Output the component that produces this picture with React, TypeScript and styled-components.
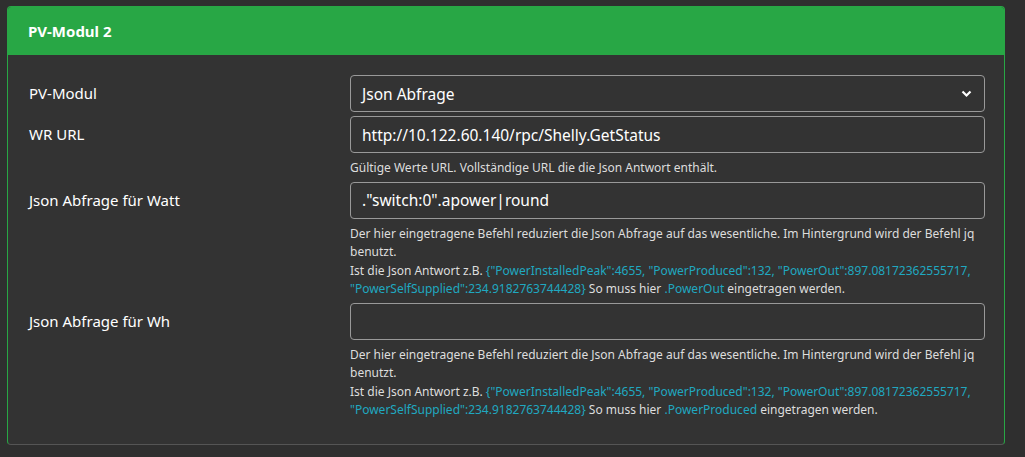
import React from "react";
import styled, { createGlobalStyle } from "styled-components";

const Global = createGlobalStyle`
  html, body { margin: 0; background: #2f2f2f; }
  body { font-family: "Noto Sans", "Open Sans", sans-serif; color: #fff; }
`;

const Page = styled.div`
  padding: 6px 20px 14px 7px;
`;
const Card = styled.div`
  border: 1px solid #28a745;
  border-bottom-color: #555;
  border-radius: 4px;
  background: #333;
  overflow: hidden;
`;
const Header = styled.div`
  background: #28a745;
  height: 48px;
  display: flex;
  align-items: center;
  padding: 0 20px;
  font-weight: 700;
  font-size: 15px;
`;
const Body = styled.div`
  padding: 20px 19px 24px 21px;
  display: flex;
  flex-direction: column;
  gap: 4px;
`;
const Row = styled.div`
  display: grid;
  grid-template-columns: 321px 1fr;
`;
const Label = styled.div`
  font-size: 15px;
  line-height: 37px;
  color: #fff;
`;
const Field = styled.div`
  display: flex;
  flex-direction: column;
`;
const Box = styled.div`
  height: 35px;
  border: 1px solid #999;
  border-radius: 4px;
  background: #333;
  display: flex;
  align-items: center;
  justify-content: space-between;
  padding: 0 12px 0 11px;
  font-size: 15.5px;
  color: #fff;
`;
const Help = styled.div`
  font-size: 12px;
  line-height: 18.5px;
  color: #ddd;
  margin-top: 6px;
`;
const Code = styled.span`
  color: #20a8c0;
`;

const Chevron = () => (
  <svg width="11" height="8" viewBox="0 0 11 8">
    <path d="M1.5 1.5 L5.5 5.5 L9.5 1.5" stroke="#fff" strokeWidth="2.2" fill="none" />
  </svg>
);

const JqHelp = ({ field }: { field: string }) => (
  <Help>
    Der hier eingetragene Befehl reduziert die Json Abfrage auf das wesentliche. Im Hintergrund wird der Befehl jq
    <br />
    benutzt.
    <br />
    Ist die Json Antwort z.B.{" "}
    <Code>{'{"PowerInstalledPeak":4655, "PowerProduced":132, "PowerOut":897.08172362555717,'}</Code>
    <br />
    <Code>{'"PowerSelfSupplied":234.9182763744428}'}</Code> So muss hier <Code>.{field}</Code> eingetragen werden.
  </Help>
);

export default function App() {
  return (
    <Page>
      <Global />
      <Card>
        <Header>PV-Modul 2</Header>
        <Body>
          <Row>
            <Label>PV-Modul</Label>
            <Field>
              <Box>
                Json Abfrage
                <Chevron />
              </Box>
            </Field>
          </Row>
          <Row>
            <Label>WR URL</Label>
            <Field>
              <Box>http://10.122.60.140/rpc/Shelly.GetStatus</Box>
              <Help>Gültige Werte URL. Vollständige URL die die Json Antwort enthält.</Help>
            </Field>
          </Row>
          <Row>
            <Label>Json Abfrage für Watt</Label>
            <Field>
              <Box>."switch:0".apower|round</Box>
              <JqHelp field="PowerOut" />
            </Field>
          </Row>
          <Row>
            <Label>Json Abfrage für Wh</Label>
            <Field>
              <Box />
              <JqHelp field="PowerProduced" />
            </Field>
          </Row>
        </Body>
      </Card>
    </Page>
  );
}
